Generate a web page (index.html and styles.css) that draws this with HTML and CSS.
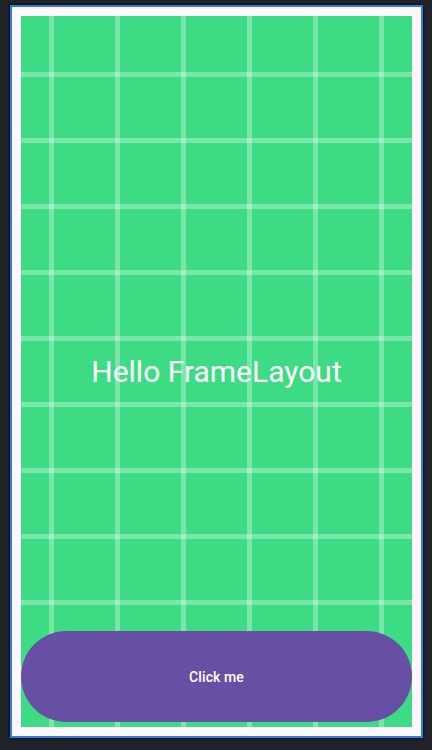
FILE: index.html
```html
<!DOCTYPE html>
<html>
<head>
<meta charset="utf-8">
<link rel="stylesheet" href="styles.css">
</head>
<body>
<div class="device">
  <div class="frame">
    <div class="hello">Hello FrameLayout</div>
    <button class="btn">Click me</button>
  </div>
</div>
</body>
</html>
```
FILE: styles.css
```css
html, body {
  margin: 0;
  padding: 0;
  background: #202329;
}
body {
  width: 432px;
  height: 750px;
  padding: 5px 0 0 10px;
  box-sizing: border-box;
}
.device {
  width: 413px;
  height: 733px;
  box-sizing: border-box;
  border: 2px solid #2a7fe8;
  background: #fef7ff;
  padding: 9px;
  box-shadow: -1px -1px 2px rgba(0,0,0,0.7), 1px 1px 2px rgba(0,0,0,0.5);
}
.frame {
  width: 391px;
  height: 711px;
  background-color: #3ddc84;
  background-image:
    linear-gradient(to right, transparent 28px, rgba(255,255,255,0.3) 28px, rgba(255,255,255,0.3) 33px, transparent 33px),
    linear-gradient(to bottom, transparent 56px, rgba(255,255,255,0.3) 56px, rgba(255,255,255,0.3) 61px, transparent 61px);
  background-size: 66px 100%, 100% 66px;
  background-repeat: repeat-x, repeat-y;
  display: grid;
  grid-template-areas: "cell";
}
.hello {
  grid-area: cell;
  align-self: center;
  justify-self: center;
  font-family: Roboto, "Noto Sans", sans-serif;
  font-size: 30px;
  color: #ffffff;
  line-height: 36px;
  margin-top: 1px;
}
.btn {
  grid-area: cell;
  align-self: end;
  margin: 0 0 5px 0;
  height: 91px;
  width: 391px;
  border: none;
  border-radius: 46px;
  background: #6750a4;
  color: #ffffff;
  font-family: Roboto, "Noto Sans", sans-serif;
  font-weight: 500;
  font-size: 14px;
  letter-spacing: 0.1px;
  padding: 0;
}
```
